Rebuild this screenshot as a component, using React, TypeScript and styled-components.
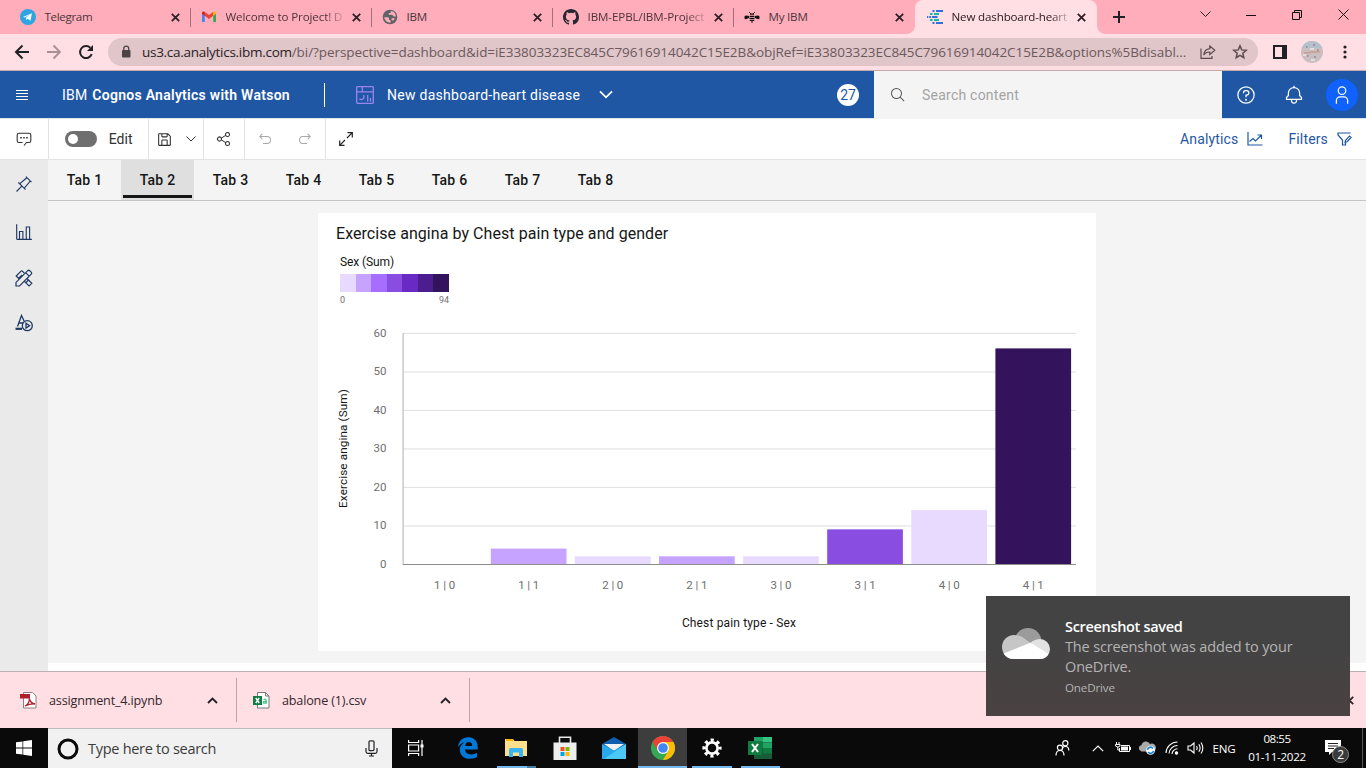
import React from "react";
import styled, { createGlobalStyle } from "styled-components";

const Global = createGlobalStyle`
  * { box-sizing: border-box; }
  html, body { margin: 0; padding: 0; overflow: hidden; }
  svg { display: block; flex: none; }
`;

const SEGOE = `"Open Sans", "Noto Sans", sans-serif`;
const PLEX = `Roboto, "Liberation Sans", sans-serif`;

const Screen = styled.div`
  position: relative;
  display: flex;
  flex-direction: column;
  width: 1366px;
  height: 768px;
  overflow: hidden;
  background: #fff;
  font-family: ${PLEX};
`;

/* ---------- browser chrome ---------- */
const TabStrip = styled.div`
  display: flex;
  height: 34px;
  padding-left: 10px;
  background: #ffadbb;
  font: 11.6px/34px ${SEGOE};
  color: #3c2b2f;
`;
const BrowserTab = styled.div<{ $active?: boolean; $last?: boolean }>`
  position: relative;
  display: flex;
  align-items: center;
  flex: none;
  width: ${(p) => (p.$active ? 182 : 181)}px;
  padding: 0 11px 0 ${(p) => (p.$active ? 12 : 10)}px;
  border-radius: 8px 8px 0 0;
  background: ${(p) => (p.$active ? "#ffdee4" : "transparent")};
  color: ${(p) => (p.$active ? "#2b2024" : "#4a3539")};
  &::after {
    content: "";
    display: ${(p) => (p.$active || p.$last ? "none" : "block")};
    position: absolute;
    right: 0;
    top: 8px;
    width: 1px;
    height: 19px;
    background: #a0717a;
  }
`;
const Flare = styled.i<{ $side: "left" | "right" }>`
  position: absolute;
  bottom: 0;
  ${(p) => p.$side}: -8px;
  width: 8px;
  height: 8px;
  background: radial-gradient(circle at ${(p) => (p.$side === "left" ? "0" : "100%")} 0, transparent 7.5px, #ffdee4 8px);
`;
const TabTitle = styled.span<{ $fade?: boolean; $space?: number }>`
  flex: 1;
  margin: 0 5px 0 8.5px;
  white-space: nowrap;
  letter-spacing: ${(p) => p.$space ?? -0.22}px;
  ${(p) => p.$fade && "mask-image: linear-gradient(90deg, #000 82%, transparent);"}
`;
const NewTab = styled.div`
  display: flex;
  align-items: center;
  margin-left: 16px;
`;
const WindowButtons = styled.div`
  display: flex;
  margin-left: auto;
  height: 29px;
`;
const WindowButton = styled.div`
  display: flex;
  align-items: center;
  justify-content: center;
  width: 46px;
`;
const AddressRow = styled.div`
  display: flex;
  align-items: center;
  height: 37px;
  padding-left: 14px;
  background: #ffdee4;
  border-bottom: 1px solid #c5a9ae;
`;
const NavIcon = styled.div<{ $w?: number }>`
  display: flex;
  width: ${(p) => p.$w ?? 32}px;
`;
const UrlPill = styled.div`
  display: flex;
  align-items: center;
  width: 1150px;
  height: 28px;
  margin: 0 15px 0 -2px;
  padding: 0 10px 0 12px;
  border-radius: 14px;
  background: #e0c5c9;
  font: 13.5px/28px ${SEGOE};
  color: #6b595c;
`;
const UrlText = styled.div`
  flex: 1;
  margin-left: 10px;
  white-space: nowrap;
  letter-spacing: -0.06px;
`;
const Host = styled.span`
  color: #2a2224;
  letter-spacing: -0.28px;
`;
const PillIcons = styled.div`
  display: flex;
  gap: 16px;
`;
const Avatar = styled.div`
  width: 22px;
  height: 22px;
  margin: 0 20px 0 14px;
  border-radius: 50%;
  overflow: hidden;
`;

/* ---------- application header ---------- */
const Header = styled.header`
  display: flex;
  align-items: center;
  height: 48px;
  background: #1f57a4;
  border-bottom: 1px solid #dfe5ee;
  color: #fff;
  font-size: 14px;
`;
const Product = styled.div`
  width: 262px;
  margin-left: 34px;
  letter-spacing: 0.27px;
  b { margin-left: 1px; font-weight: 600; }
`;
const HeaderRule = styled.div`
  width: 1px;
  height: 24px;
  margin-right: 31px;
  background: #fff;
`;
const DashboardName = styled.div`
  width: 193px;
  margin: 0 19px 0 13px;
  letter-spacing: 0.27px;
  white-space: nowrap;
`;
const CountBadge = styled.div`
  width: 22px;
  height: 22px;
  margin: 0 15px 0 auto;
  border-radius: 50%;
  background: #fff;
  color: #1f57a4;
  text-align: center;
  font: 14px/22px ${PLEX};
`;
const SearchField = styled.div`
  display: flex;
  align-items: center;
  align-self: flex-start;
  gap: 16px;
  width: 348px;
  height: 48px;
  padding-left: 16px;
  background: #f4f4f4;
  color: #a3a3a3;
  letter-spacing: 0.23px;
`;
const HeaderActions = styled.div`
  display: flex;
  align-items: center;
  gap: 28px;
  width: 144px;
  padding-left: 14px;
`;
const UserCircle = styled.div`
  display: flex;
  align-items: center;
  justify-content: center;
  width: 32px;
  height: 32px;
  margin-left: -6px;
  border-radius: 50%;
  background: #0f62fe;
`;

/* ---------- toolbar ---------- */
const Toolbar = styled.div`
  display: flex;
  height: 41px;
  border-bottom: 1px solid #e3e3e3;
  font-size: 14px;
  color: #323232;
`;
const ToolGroup = styled.div<{ $w: number; $pad: number; $open?: boolean }>`
  display: flex;
  align-items: center;
  justify-content: space-between;
  width: ${(p) => p.$w}px;
  padding: 0 ${(p) => p.$pad}px;
  border-right: ${(p) => (p.$open ? "none" : "1px solid #e3e3e3")};
`;
const Toggle = styled.div`
  width: 32px;
  height: 16px;
  padding: 3px;
  border-radius: 8px;
  background: #6f6f6f;
  &::before {
    content: "";
    display: block;
    width: 10px;
    height: 10px;
    border-radius: 50%;
    background: #fff;
  }
`;
const ToolLink = styled.div`
  display: flex;
  align-items: center;
  gap: 9px;
  margin-right: 25px;
  color: #1f57a4;
  letter-spacing: 0.15px;
  &:last-child { margin-right: 13px; }
`;
const Spacer = styled.div`
  flex: 1;
`;

/* ---------- workspace ---------- */
const Workspace = styled.div`
  display: flex;
  height: 511px;
`;
const Rail = styled.nav`
  display: flex;
  flex-direction: column;
  align-items: center;
  gap: 28px;
  width: 48px;
  padding-top: 15px;
  background: #eaeaea;
  svg:nth-child(2) { margin-top: 2px; }
  svg:nth-child(4) { margin-top: -1px; }
`;
const Main = styled.main`
  flex: 1;
  display: flex;
  flex-direction: column;
  background: #fff;
`;
const PageTabs = styled.div`
  display: flex;
  height: 41px;
  background: #f4f4f4;
  border-bottom: 1px solid #c6c6c6;
`;
const PageTab = styled.div<{ $active?: boolean }>`
  width: 73px;
  height: 40px;
  padding: 0 2px;
  background: ${(p) => (p.$active ? "#dfdfdf" : "transparent")};
  color: #161616;
  font: 500 14px/40px ${PLEX};
  letter-spacing: 0.25px;
  text-align: center;
  span {
    display: block;
    height: 38px;
    border-bottom: ${(p) => (p.$active ? "3px solid #161616" : "none")};
  }
`;
const Canvas = styled.div`
  height: 462px;
  padding: 12px 0 0 270px;
  background: #f4f4f4;
`;
const Card = styled.section`
  width: 778px;
  height: 438px;
  padding: 11px 0 0 18px;
  background: #fff;
  color: #161616;
`;
const CardTitle = styled.h1`
  margin: 0;
  font: 400 16px/20px ${PLEX};
  letter-spacing: 0.06px;
`;
const Legend = styled.div`
  width: 109px;
  margin: 10px 0 0 4px;
  font-size: 12px;
  line-height: 16px;
  letter-spacing: -0.1px;
`;
const Swatches = styled.div`
  display: flex;
  height: 18px;
  margin-top: 4px;
`;
const Swatch = styled.i<{ $c: string }>`
  flex: 1;
  background: ${(p) => p.$c};
`;
const LegendRange = styled.div`
  display: flex;
  justify-content: space-between;
  color: #6f6f6f;
  font-size: 9px;
  line-height: 16px;
  letter-spacing: 0;
`;

/* ---------- downloads ---------- */
const Downloads = styled.div`
  display: flex;
  align-items: center;
  height: 57px;
  background: #ffdee4;
  border-top: 1px solid #bdb0b2;
  font: 12.6px/20px ${SEGOE};
  color: #33272a;
`;
const DownloadItem = styled.div<{ $w: number; $gap: number }>`
  display: flex;
  align-items: center;
  width: ${(p) => p.$w}px;
  height: 44px;
  padding: 0 18px 0 ${(p) => p.$gap}px;
  border-right: 1px solid #bda3a8;
`;
const FileName = styled.div`
  flex: 1;
  margin: 1px 0 0 12px;
  letter-spacing: -0.17px;
`;

/* ---------- taskbar ---------- */
const Taskbar = styled.footer`
  display: flex;
  height: 40px;
  background: #0a0a0a;
  color: #fff;
  font-family: ${SEGOE};
`;
const StartButton = styled.div`
  display: flex;
  align-items: center;
  justify-content: center;
  width: 48px;
`;
const TaskSearch = styled.div`
  display: flex;
  align-items: center;
  width: 344px;
  padding: 0 14px 0 9px;
  background: #f1f1f1;
  border-top: 1px solid #bdbdbd;
  color: #3b3b3b;
  font-size: 14.5px;
  letter-spacing: -0.28px;
  span { flex: 1; margin-left: 9px; }
`;
const TaskApps = styled.div`
  display: flex;
`;
const TaskApp = styled.div<{ $state?: "open" | "active" | "multi" }>`
  position: relative;
  display: flex;
  align-items: center;
  justify-content: center;
  width: 48.8px;
  background: ${(p) => (p.$state === "active" ? "#3d3d3d" : "transparent")};
  &:first-child { margin-right: 2.5px; }
  &::after {
    content: "";
    position: absolute;
    bottom: 0;
    left: ${(p) => (p.$state === "active" ? 0 : 4.5)}px;
    right: ${(p) => (p.$state === "active" ? 0 : 4.5)}px;
    height: ${(p) => (p.$state ? 2 : 0)}px;
    background: ${(p) => (p.$state === "multi" ? "linear-gradient(90deg, #76b9ed 78%, #4d7ba0 78%)" : "#76b9ed")};
  }
`;
const Tray = styled.div`
  display: flex;
  align-items: center;
  margin-left: auto;
  font-size: 11.6px;
  letter-spacing: -0.28px;
`;
const TrayIcon = styled.div<{ $w: number }>`
  display: flex;
  justify-content: center;
  width: ${(p) => p.$w}px;
`;
const Clock = styled.div`
  width: 60px;
  margin: 0 7px 0 5px;
  text-align: center;
  line-height: 18px;
  white-space: nowrap;
  div:first-child { letter-spacing: -0.5px; }
`;
const ActionCenter = styled.div`
  position: relative;
  width: 48px;
  height: 40px;
  padding: 12px 0 0 11px;
`;
const ActionBadge = styled.div`
  position: absolute;
  left: 18px;
  top: 18px;
  width: 17px;
  height: 17px;
  border: 1px solid #8a8a8a;
  border-radius: 50%;
  background: #3a3a3a;
  font-size: 12px;
  line-height: 15px;
  text-align: center;
`;
const DesktopEdge = styled.div`
  width: 4px;
  height: 40px;
  border-left: 1px solid #555;
`;

/* ---------- toast ---------- */
const Toast = styled.aside`
  position: absolute;
  left: 986px;
  top: 596px;
  display: flex;
  width: 364px;
  height: 120px;
  padding: 21px 0 0 16px;
  background: linear-gradient(180deg, #434343 0%, #444343 45%, #4a4142 100%);
  font: 14.5px/20px ${SEGOE};
  color: #b4b4b4;
  svg { margin-top: 11px; }
`;
const ToastText = styled.div`
  margin-left: 15px;
  letter-spacing: -0.15px;
  white-space: nowrap;
`;
const ToastTitle = styled.div`
  color: #fff;
  font-weight: 600;
  letter-spacing: -0.32px;
`;
const ToastSource = styled.div`
  margin-top: 1px;
  font-size: 11.6px;
`;

/* ---------- icons ---------- */
const Carbon = ({ d, size = 16, color = "currentColor", flip }: { d: string; size?: number; color?: string; flip?: boolean }) => (
  <svg width={size} height={size} viewBox="0 0 32 32" fill={color}>
    <path d={d} transform={flip ? "matrix(-1 0 0 1 32 0)" : undefined} />
  </svg>
);
const P = {
  search: "M29,27.5859l-7.5521-7.5521a11.0177,11.0177,0,1,0-1.4141,1.4141L27.5859,29ZM4,13a9,9,0,1,1,9,9A9.01,9.01,0,0,1,4,13Z",
  help: "M16,2A14,14,0,1,0,30,16,14,14,0,0,0,16,2Zm0,26A12,12,0,1,1,28,16,12,12,0,0,1,16,28ZM14.5,23.5a1.5,1.5,0,1,0,3,0a1.5,1.5,0,1,0-3,0ZM17,8H15.5A4.49,4.49,0,0,0,11,12.5V13h2v-.5A2.5,2.5,0,0,1,15.5,10H17a2.5,2.5,0,0,1,0,5H15v4.5h2V17a4.5,4.5,0,0,0,0-9Z",
  bell: "M28.7071,19.293,26,16.5859V13a10.0136,10.0136,0,0,0-9-9.9492V1H15V3.0508A10.0136,10.0136,0,0,0,6,13v3.5859L3.2929,19.293A1,1,0,0,0,3,20v3a1,1,0,0,0,1,1h7v.7768a5.152,5.152,0,0,0,4.5,5.1987A5.0057,5.0057,0,0,0,21,25V24h7a1,1,0,0,0,1-1V20A1,1,0,0,0,28.7071,19.293ZM19,25a3,3,0,0,1-6,0V24h6Zm8-3H5V20.4141L7.707,17.707A1,1,0,0,0,8,17V13a8,8,0,0,1,16,0v4a1,1,0,0,0,.293.707L27,20.4141Z",
  user: "M16,4a5,5,0,1,1-5,5,5,5,0,0,1,5-5m0-2a7,7,0,1,0,7,7A7,7,0,0,0,16,2ZM26,30H24V25a5,5,0,0,0-5-5H13a5,5,0,0,0-5,5v5H6V25a7,7,0,0,1,7-7h6a7,7,0,0,1,7,7Z",
  save: "M27.71,9.29l-5-5A1,1,0,0,0,22,4H6A2,2,0,0,0,4,6V26a2,2,0,0,0,2,2H26a2,2,0,0,0,2-2V10A1,1,0,0,0,27.71,9.29ZM12,6h8v4H12Zm8,20H12V18h8Zm2,0V18a2,2,0,0,0-2-2H12a2,2,0,0,0-2,2v8H6V6h4v4a2,2,0,0,0,2,2h8a2,2,0,0,0,2-2V6.41l4,4V26Z",
  share: "M23,20a5,5,0,0,0-3.89,1.89L11.8,17.32a4.46,4.46,0,0,0,0-2.64l7.31-4.57A5,5,0,1,0,18,7a4.79,4.79,0,0,0,.2,1.32l-7.31,4.57a5,5,0,1,0,0,6.22l7.31,4.57A4.79,4.79,0,0,0,18,25a5,5,0,1,0,5-5ZM23,4a3,3,0,1,1-3,3A3,3,0,0,1,23,4ZM7,19a3,3,0,1,1,3-3A3,3,0,0,1,7,19Zm16,9a3,3,0,1,1,3-3A3,3,0,0,1,23,28Z",
  undo: "M20,10H7.8149l3.5874-3.5859L10,5,4,11,10,17l1.4023-1.4146L7.8179,12H20a6,6,0,0,1,0,12H12v2h8a8,8,0,0,0,0-16Z",
  pin: "M28.5858,13.3137,30,11.9,20,2,18.6858,3.4142l1.1858,1.1858L8.38,14.3225,6.6641,12.6067,5.25,14l5.6572,5.6773L2,28.5831,3.41,30l8.9111-8.9087L18,26.7482l1.3929-1.414L17.6765,23.618l9.724-11.4895ZM16.26,22.1987,9.8013,15.74,21.2932,6.016l4.6911,4.6911Z",
  bars: "M27,28V6H19V28H15V14H7V28H4V2H2V28a2,2,0,0,0,2,2H30V28ZM13,28H9V16h4Zm12,0H21V8h4Z",
};

const Line = ({ d, w, h, sw = 1, color = "#202124", children }: { d: string; w: number; h: number; sw?: number; color?: string; children?: React.ReactNode }) => (
  <svg width={w} height={h} viewBox={`0 0 ${w} ${h}`} fill="none" stroke={color} strokeWidth={sw}>
    <path d={d} />
    {children}
  </svg>
);
const CloseX = () => <Line w={9} h={9} sw={1.8} d="M.8.8l7.4 7.4M8.2.8L.8 8.2" color="#2b2024" />;

const Telegram = () => (
  <svg width="16" height="16" viewBox="0 0 16 16"><circle cx="8" cy="8" r="8" fill="#2ca5e0" /><path d="M3 7.9l8.9-3.6-1.4 7.4-2.8-2-1.4 1.4-.3-2.4 3.7-3.1-4.7 2.9z" fill="#fff" /></svg>
);
const Gmail = () => (
  <svg width="16" height="16" viewBox="0 0 16 16">
    <path d="M1 4v9h2.8V6.5z" fill="#4285f4" /><path d="M15 4v9h-2.8V6.5z" fill="#34a853" />
    <path d="M1 4.4C1 2.4 2.8 2 3.9 3v3.9L1 4.8z" fill="#c5221f" /><path d="M15 4.4c0-2-1.8-2.4-2.9-1.4v3.9L15 4.8z" fill="#fbbc04" />
    <path d="M3.8 2.9L8 6.1l4.2-3.2v3.9L8 10 3.8 6.8z" fill="#ea4335" />
  </svg>
);
const Globe = () => (
  <svg width="16" height="16" viewBox="0 0 16 16"><circle cx="8" cy="8" r="7.3" fill="#5f6368" /><path d="M2.2 8.3h3.5c1 0 1.3.8 1.3 1.5v1.2h1.4l.2 2.7a6 6 0 01-6.4-5.4zM8.8 2.1L8.7 4H6.8v1.7h3.4c.8 0 .9 1.9 1.9 1.9h1.8A6 6 0 008.8 2.1zM9.7 9.3h3l-1 2.1-2.2-.5z" fill="#ffadbb" /></svg>
);
const Github = () => (
  <svg width="16" height="16" viewBox="0 0 16 16" fill="#24292f"><path d="M8 0C3.58 0 0 3.58 0 8c0 3.54 2.29 6.53 5.47 7.59.4.07.55-.17.55-.38 0-.19-.01-.82-.01-1.49-2.01.37-2.53-.49-2.69-.94-.09-.23-.48-.94-.82-1.13-.28-.15-.68-.52-.01-.53.63-.01 1.08.58 1.23.82.72 1.21 1.87.87 2.33.66.07-.52.28-.87.51-1.07-1.78-.2-3.64-.89-3.64-3.95 0-.87.31-1.59.82-2.15-.08-.2-.36-1.02.08-2.12 0 0 .67-.21 2.2.82a7.6 7.6 0 014 0c1.53-1.04 2.2-.82 2.2-.82.44 1.1.16 1.92.08 2.12.51.56.82 1.27.82 2.15 0 3.07-1.87 3.75-3.65 3.95.29.25.54.73.54 1.48 0 1.07-.01 1.93-.01 2.2 0 .21.15.46.55.38A8.01 8.01 0 0016 8c0-4.42-3.58-8-8-8z" /></svg>
);
const Bee = () => (
  <svg width="16" height="16" viewBox="0 0 16 16">
    <path d="M5.2 3.2L7 5M10.800 3.200L9 5" stroke="#111" />
    <path d="M5.400 7L2 6.500C0 6.500-.2 10.300 1.800 10.300L5 9zM10.600 7l3.400-.5c2 0 2.200 3.800.2 3.800L11 9z" fill="#111" />
    <path d="M6 5.200h4M5.800 7.400h4.400M5.500 9.400h5M5.800 11.300h4.400M7 13h2" stroke="#111" strokeWidth="1.200" />
  </svg>
);
const CognosMark = () => (
  <svg width="16" height="16" viewBox="0 0 16 16" strokeWidth="2" fill="none">
    <path d="M9 2h7M5.5 2h2M5 8h5.5M9 14h7M5.5 14h2M2.3 8h1.7" stroke="#2f6fe0" />
    <path d="M7 5h5M3 5h2.5M7 11h5M3 11h2.5" stroke="#14b8a6" />
    <path d="M0 8h1.3" stroke="#2f6fe0" />
  </svg>
);

const TABS = [
  { icon: <Telegram />, title: "Telegram", space: -0.34 },
  { icon: <Gmail />, title: "Welcome to Project! D", fade: true, space: -0.12 },
  { icon: <Globe />, title: "IBM" },
  { icon: <Github />, title: "IBM-EPBL/IBM-Project", fade: true, space: -0.1 },
  { icon: <Bee />, title: "My IBM", last: true },
  { icon: <CognosMark />, title: "New dashboard-heart", fade: true, active: true, space: -0.16 },
];

/* ---------- chart ---------- */
const BARS = [
  { label: "1 | 0", value: 0, color: "#e8daff" },
  { label: "1 | 1", value: 4, color: "#c5a3ff" },
  { label: "2 | 0", value: 2, color: "#e8daff" },
  { label: "2 | 1", value: 2, color: "#c5a3ff" },
  { label: "3 | 0", value: 2, color: "#e8daff" },
  { label: "3 | 1", value: 9, color: "#8a4de2" },
  { label: "4 | 0", value: 14, color: "#e8daff" },
  { label: "4 | 1", value: 56, color: "#32135c" },
];
const Chart = () => {
  const left = 67;
  const base = 256;
  const step = 84.1;
  const unit = 3.85;
  return (
    <svg width="760" height="330" viewBox="0 0 760 330" fontFamily={PLEX} fontSize="12">
      {[60, 50, 40, 30, 20, 10].map((v) => (
        <rect key={v} x={left} y={base - v * unit - 0.2} width="673" height={1.2} fill="#e4e4e4" />
      ))}
      {[60, 50, 40, 30, 20, 10, 0].map((v) => (
        <text key={v} x="50.5" y={Math.round(base - v * unit + 3.9)} textAnchor="end" fill="#6f6f6f" fontSize="11.5">{v}</text>
      ))}
      <rect x={left - 0.5} y="25" width="1.2" height="232" fill="#bdbdbd" />
      {BARS.map((b, i) => (
        <g key={b.label}>
          <rect x={left + step * i + 3.7} y={base - b.value * unit} width="75.7" height={b.value * unit} fill={b.color} />
          <text x={left + step * (i + 0.5) - 0.5} y="281" textAnchor="middle" fill="#6f6f6f" fontSize="11.5" letterSpacing="-.1">{b.label}</text>
        </g>
      ))}
      <rect x={left} y={base} width="673" height="1" fill="#8d8d8d" />
      <text x="403" y="319" textAnchor="middle" fill="#161616" letterSpacing=".15">Chest pain type - Sex</text>
      <text transform="translate(11 140.5) rotate(-90)" textAnchor="middle" fill="#161616" fontSize="11.7" letterSpacing=".13">Exercise angina (Sum)</text>
    </svg>
  );
};

export default function App() {
  const navy = "#1d3864";
  return (
    <Screen>
      <Global />
      <TabStrip>
        {TABS.map((t) => (
          <BrowserTab key={t.title} $active={t.active} $last={t.last}>
            {t.active && <><Flare $side="left" /><Flare $side="right" /></>}
            {t.icon}
            <TabTitle $fade={t.fade} $space={t.space}>{t.title}</TabTitle>
            <CloseX />
          </BrowserTab>
        ))}
        <NewTab><Line w={12} h={12} sw={2} d="M6 0v12M0 6h12" /></NewTab>
        <WindowButtons>
          <WindowButton><Line w={11} h={7} d="M.5.5l5 5 5-5" /></WindowButton>
          <WindowButton><Line w={10} h={2} d="M0 1.5h10" color="#111" /></WindowButton>
          <WindowButton><Line w={10} h={10} d="M.5 2.5h7v7h-7zM2.5 2.5v-2h7v7h-2" color="#111" /></WindowButton>
          <WindowButton><Line w={11} h={11} d="M.5.5l10 10M10.5.5l-10 10" color="#111" /></WindowButton>
        </WindowButtons>
      </TabStrip>
      <AddressRow>
        <NavIcon><Line w={16} h={16} sw={2} d="M15 8H2M8.5 1.5L2 8l6.5 6.5" /></NavIcon>
        <NavIcon><Line w={16} h={16} sw={1.8} color="#a78f94" d="M1 8h13M7.5 1.5L14 8l-6.5 6.5" /></NavIcon>
        <NavIcon>
          <Line w={16} h={16} sw={2} d="M13.7 10.2A6 6 0 1112.3 3.8"><path d="M15 1v6H9z" fill="#202124" stroke="none" /></Line>
        </NavIcon>
        <UrlPill>
          <svg width="12" height="14" viewBox="0 0 12 14"><rect x="2" y="5" width="8.5" height="7.5" rx="1" fill="#4d4346" /><path d="M3.8 5.5V3.5a2.4 2.4 0 014.9 0v2" fill="none" stroke="#4d4346" strokeWidth="1.3" /></svg>
          <UrlText><Host>us3.ca.analytics.ibm.com</Host>/bi/?perspective=dashboard&amp;id=iE33803323EC845C79616914042C15E2B&amp;objRef=iE33803323EC845C79616914042C15E2B&amp;options%5Bdisabl...</UrlText>
          <PillIcons>
            <Line w={16} h={16} sw={1.2} color="#5c4c50" d="M1 4.5v9.8h11V12M9.8 2l5 4.2-5 4.2V8C7 8 5 9 3.7 11c.4-3.5 2.5-5.8 6.1-6.3z" />
            <Line w={16} h={16} sw={1.5} color="#5c4c50" d="M8 1.8l1.7 4.1 4.5.4-3.4 2.9 1 4.4L8 11.3l-3.8 2.3 1-4.4-3.4-2.9 4.5-.4z" />
          </PillIcons>
        </UrlPill>
        <Line w={14} h={14} sw={2} d="M1 1h12v12H1z"><path d="M11 1v12" strokeWidth="4" /></Line>
        <Avatar>
          <svg width="22" height="22" viewBox="0 0 22 22"><rect width="22" height="22" fill="#c9bfc1" /><path d="M0 0h22v7H0z" fill="#b4c0cc" /><path d="M3 12l16-1.5" stroke="#c99d90" strokeWidth="1.5" /><path d="M12 4h2M16 9h1.5M6 15h1.5M13 16h2M5 6h1.5" stroke="#7c6c70" strokeWidth="1.2" /><path d="M2 14h3M9 8h4M10 19h4" stroke="#e4dcdd" strokeWidth="2" /></svg>
        </Avatar>
        <svg width="4" height="14" viewBox="0 0 4 14" fill="#202124"><circle cx="2" cy="2" r="1.6" /><circle cx="2" cy="7" r="1.6" /><circle cx="2" cy="12" r="1.6" /></svg>
      </AddressRow>

      <Header>
        <svg width="28" height="12" viewBox="0 0 28 12" stroke="#fff"><path d="M16 1.5h12M16 4.5h12M16 7.5h12M16 10.5h12" /></svg>
        <Product>IBM <b>Cognos Analytics with Watson</b></Product>
        <HeaderRule />
        <Line w={18} h={18} color="#9a85f0" sw={1.3} d="M1.5.7h15q.8 0 .8.8v15q0 .8-.8.8h-15q-.8 0-.8-.8v-15q0-.8.8-.8zM.7 5.8h16.6M6.3.7v5.1M7.3 9.2a2.5 2.5 0 11-3.8 3.5M11.7 9v6.5M14.5 12v3.5" />
        <DashboardName>New dashboard-heart disease</DashboardName>
        <Line w={14} h={9} color="#fff" sw={1.8} d="M1 1.3l6 6 6-6" />
        <CountBadge>27</CountBadge>
        <SearchField><Carbon d={P.search} color="#5a5a5a" />Search content</SearchField>
        <HeaderActions>
          <Carbon d={P.help} size={20} />
          <Carbon d={P.bell} size={20} />
          <UserCircle><Carbon d={P.user} size={20} /></UserCircle>
        </HeaderActions>
      </Header>

      <Toolbar>
        <ToolGroup $w={49} $pad={16}>
          <Line w={16} h={14} color="#323232" sw={1.1} d="M6.5 10.5H3q-1.8 0-1.8-1.8V3Q1.2 1.2 3 1.2h10q1.8 0 1.8 1.8v5.7q0 1.8-1.8 1.8h-2.5L8 13.5"><path d="M4.2 5.8h1.6M7.2 5.8h1.6M10.2 5.8h1.6" strokeWidth="1.6" /></Line>
        </ToolGroup>
        <ToolGroup $w={100} $pad={15.5}><Toggle /><span>Edit</span></ToolGroup>
        <ToolGroup $w={55} $pad={7}><Carbon d={P.save} size={17} /><Line w={10} h={6} color="#323232" d="M.5.5l4.5 4.5L9.5.5" /></ToolGroup>
        <ToolGroup $w={41} $pad={12}><Carbon d={P.share} /></ToolGroup>
        <ToolGroup $w={81} $pad={12}><Carbon d={P.undo} color="#a8a8a8" /><Carbon d={P.undo} color="#a8a8a8" flip /></ToolGroup>
        <ToolGroup $w={41} $pad={13} $open><Line w={14} h={14} color="#222" sw={1.2} d="M8.5.7h4.8v4.8M13.3.7L8 6M5.5 13.3H.7V8.5M.7 13.3L6 8" /></ToolGroup>
        <Spacer />
        <ToolLink>Analytics<Line w={16} h={14} color="#1f57a4" sw={1.2} d="M1 0v13h14.5M2.5 9.5l3.5-3 2.5 2.5L14 3.5M10.5 3h4v4" /></ToolLink>
        <ToolLink>Filters<Line w={16} h={14} color="#1f57a4" sw={1.2} d="M13 1.5V1H1v2l4.5 5v5h3V9M8.5 8.3l4-4.3 1.6 1.5-4 4.2-2 .6z" /></ToolLink>
      </Toolbar>

      <Workspace>
        <Rail>
          <Carbon d={P.pin} size={18} color={navy} />
          <Carbon d={P.bars} size={18} color={navy} />
          <Line w={18} h={18} color={navy} sw={1.2} d="M1 17v-3.6L12.7 1.7q1-.9 2 0l1.5 1.5q.9 1 0 2L4.6 17zM10.7 3.7l3.5 3.5M7 6L3.6 9.4 1.2 7l4.6-4.6q.9-.9 1.8 0L9.2 4M12 9.5l4.8 4.8-2.7 2.7-4.7-4.7M11 13.5l2.5-2.5" />
          <Line w={18} h={18} color={navy} sw={1.3} d="M2.5 12.5L6.5 1.5l2.8 6M4 9h4"><circle cx="12.3" cy="11.7" r="5" /><path d="M11 9.3v4.8l3.6-2.4z" /><path d="M.5 14.8h6.5" strokeWidth="2.2" /></Line>
        </Rail>
        <Main>
          <PageTabs>
            {[1, 2, 3, 4, 5, 6, 7, 8].map((n) => (
              <PageTab key={n} $active={n === 2}><span>Tab {n}</span></PageTab>
            ))}
          </PageTabs>
          <Canvas>
            <Card>
              <CardTitle>Exercise angina by Chest pain type and gender</CardTitle>
              <Legend>
                Sex (Sum)
                <Swatches>
                  {["#e8daff", "#c5a3ff", "#a56eff", "#8a4de2", "#6929c4", "#4c1d8f", "#32135c"].map((c) => <Swatch key={c} $c={c} />)}
                </Swatches>
                <LegendRange><span>0</span><span>94</span></LegendRange>
              </Legend>
              <Chart />
            </Card>
          </Canvas>
        </Main>
      </Workspace>

      <Downloads>
        <DownloadItem $w={237} $gap={20}>
          <svg width="17" height="17" viewBox="0 0 17 17"><path d="M3.5.5h9l3.5 3.5v12H3.5z" fill="#fff" stroke="#8c8082" /><path d="M0 2h10v4.5H0z" fill="#b01e2d" /><path d="M5 14c3-1.5 4.5-4.5 4.3-7.5.8 3 2.2 5 5.7 5.5-4-.2-6.5.3-10 2z" fill="none" stroke="#b01e2d" strokeWidth="1.3" /></svg>
          <FileName>assignment_4.ipynb</FileName>
          <Line w={11} h={7} sw={1.8} d="M1 6l4.5-4.5L10 6" />
        </DownloadItem>
        <DownloadItem $w={233} $gap={16}>
          <svg width="17" height="17" viewBox="0 0 17 17"><path d="M4.5.5h8l3.5 3.5v12H4.5z" fill="#fff" stroke="#777" /><path d="M12.5.5v3.5H16" fill="none" stroke="#777" /><path d="M0 4h9v9H0z" fill="#107c41" /><path d="M2.8 6l3.4 5M6.2 6l-3.4 5" stroke="#fff" strokeWidth="1.4" /><path d="M10.5 7.5q2.7-1 2.7 1v3.2M13 9.3q-3-.2-2.6 1.3.8 1.3 2.6-.2" stroke="#33c481" strokeWidth="1.2" fill="none" /></svg>
          <FileName>abalone (1).csv</FileName>
          <Line w={11} h={7} sw={1.8} d="M1 6l4.5-4.5L10 6" />
        </DownloadItem>
        <Spacer />
        <NavIcon $w={21}><CloseX /></NavIcon>
      </Downloads>

      <Taskbar>
        <StartButton>
          <svg width="16" height="16" viewBox="0 0 16 16" fill="#fff"><path d="M0 2.3l6.5-.9v6.2H0zM7.2 1.3L16 0v7.6H7.2zM0 8.4h6.5v6.2L0 13.7zM7.2 8.4H16V16l-8.8-1.3z" /></svg>
        </StartButton>
        <TaskSearch>
          <svg width="22" height="22" viewBox="0 0 22 22"><circle cx="11" cy="11" r="9" fill="none" stroke="#0a0a0a" strokeWidth="3" /></svg>
          <span>Type here to search</span>
          <Line w={13} h={17} sw={1.2} d="M6.5.8q2.5 0 2.5.6v8.7q0 .6-2.5.6t-2.500-.6V1.400q0-.6 2.500-.6zM1 8v3.500q0 1.800 1.800 1.800h7.400q1.800 0 1.800-1.800V8M6.500 13.300V16M4 16h5" />
        </TaskSearch>
        <TaskApps>
          <TaskApp><Line w={18} h={16} color="#fff" sw={1.2} d="M1.6 0v2.5h10V0M1.6 5h10v6h-10zM1.6 16v-2.5h10V16M15 0v16"><path d="M13.5 6h3" strokeWidth="3" /></Line></TaskApp>
          <TaskApp>
            <svg width="22" height="22" viewBox="0 0 22 22" fill="#0078d7"><path d="M1 10C1.800 4 5.500.3 11.500.3c6 0 9.200 4.500 9.200 9.500v2.700H8c.3 3.600 3.200 4.900 6.200 4.900 2.400 0 4.200-.7 5.800-1.700v4.400c-2 1.100-4.100 1.700-6.800 1.700-6.700 0-10.400-4-10.400-9.100C2.800 9.400 5.200 6.500 8 5.300 5 5.700 2.800 7.300 1 10zM8.200 8.900h7c0-2.700-1.200-3.900-3.400-3.900-2.100 0-3.300 1.500-3.600 3.900z" /></svg>
          </TaskApp>
          <TaskApp $state="multi">
            <svg width="22" height="20" viewBox="0 0 22 20"><path d="M0 1h8l1.500 2H22v15H0z" fill="#ffe08a" /><path d="M1 1h7v2H1z" fill="#f7b500" /><path d="M4 19v-7.500q0-1.500 1.500-1.500h11q1.500 0 1.500 1.500V19h-4v-4.500H8V19z" fill="#3ab4f2" /></svg>
          </TaskApp>
          <TaskApp>
            <svg width="24" height="24" viewBox="0 0 24 24"><path d="M6.500 7V1.200h11V7" fill="none" stroke="#e8e8e8" strokeWidth="1.6" /><path d="M.5 6.500h23V24H.5z" fill="#eee" /><path d="M7.500 11h4v4h-4z" fill="#f25022" /><path d="M12.500 11h4v4h-4z" fill="#7fba00" /><path d="M7.500 16h4v4h-4z" fill="#00a4ef" /><path d="M12.500 16h4v4h-4z" fill="#ffb900" /></svg>
          </TaskApp>
          <TaskApp>
            <svg width="24" height="24" viewBox="0 0 24 24"><path d="M0 8L12 1l12 7-12 8z" fill="#0f5fae" /><path d="M2 8h20l-10 7z" fill="#f2f2f2" /><path d="M0 8l12 6.500L24 8v15H0z" fill="#29a9ea" /><path d="M24 8v15H2z" fill="#4cc8f6" /></svg>
          </TaskApp>
          <TaskApp $state="active">
            <svg width="24" height="24" viewBox="0 0 24 24"><circle cx="12" cy="12" r="12" fill="#34a853" /><path d="M12 0a12 12 0 0110.400 6H12L6.800 15 1.600 6A12 12 0 0112 0z" fill="#ea4335" /><path d="M22.400 6A12 12 0 0112 24l5.200-9L12 6z" fill="#fbbc04" /><circle cx="12" cy="12" r="6" fill="#fff" /><circle cx="12" cy="12" r="4.8" fill="#4285f4" /></svg>
          </TaskApp>
          <TaskApp $state="open">
            <svg width="20" height="20" viewBox="0 0 20 20" fill="none" stroke="#fff"><circle cx="10" cy="10" r="5.6" strokeWidth="2.6" /><circle cx="10" cy="10" r="8" strokeWidth="3.2" strokeDasharray="3.14 3.14" strokeDashoffset="1.57" /></svg>
          </TaskApp>
          <TaskApp $state="open">
            <svg width="24" height="22" viewBox="0 0 24 22"><path d="M6 0h9v5.500H6z" fill="#21a366" /><path d="M15 0h9v5.500h-9z" fill="#33c481" /><path d="M6 5.500h9V11H6z" fill="#107c41" /><path d="M15 5.500h9V11h-9z" fill="#21a366" /><path d="M6 11h18v11H6z" fill="#185c37" /><path d="M15 11h9v5.500h-9z" fill="#107c41" /><path d="M0 4h14v14H0z" fill="#107c41" /><path d="M4 7l6 8M10 7l-6 8" stroke="#fff" strokeWidth="2" /></svg>
          </TaskApp>
        </TaskApps>
        <Tray>
          <TrayIcon $w={46}><Line w={15} h={16} color="#fff" sw={1.2} d="M1 15.500q0-5 4-5t4 5M7.500 8q.5-1.500 3-1.500 3.300 0 3.300 4"><circle cx="5" cy="7.8" r="2.6" /><circle cx="10.3" cy="3.3" r="2.6" /></Line></TrayIcon>
          <TrayIcon $w={26}><Line w={12} h={7} color="#fff" sw={1.2} d="M.8 6.200L6 1l5.200 5.200" /></TrayIcon>
          <TrayIcon $w={23}><Line w={16} h={12} color="#fff" sw={1} d="M6 3.500h8.500v6H4.500V6M1.500 0v2.500M4 0v2.500M.5 2.500h4.500v1.500q-2 2.200-4.500 0zM2.800 5v3h1.700M15.500 5v3"><path d="M6 6.500h7" strokeWidth="4" /></Line></TrayIcon>
          <TrayIcon $w={25}>
            <svg width="18" height="14" viewBox="0 0 18 14"><path d="M3.500 10.500a3.200 3.200 0 010-6.300A4.500 4.500 0 0112 3a4 4 0 013.500 7.500z" fill="#a9a9a9" /><circle cx="12.5" cy="9.3" r="4.5" fill="#fff" /><path d="M9.500 8.800a3 3 0 015.400-1.300M15.500 9.800a3 3 0 01-5.400 1.300" fill="none" stroke="#1683d8" strokeWidth="1.7" /></svg>
          </TrayIcon>
          <TrayIcon $w={25}><Line w={14} h={14} color="#fff" sw={1.1} d="M1 12A11.500 11.500 0 0112.500 1M4 12.500a8.500 8.500 0 018.500-8M7 13a5.500 5.500 0 015.500-5.200"><circle cx="11.5" cy="12" r="1.2" fill="#fff" /></Line></TrayIcon>
          <TrayIcon $w={22}><Line w={17} h={14} color="#fff" sw={1.1} d="M1 5h2.500L7 2v10L3.500 9H1zM9.500 5q1.300 2 0 4M11.800 3.200q2.600 3.800 0 7.600M14 1.500q3.700 5.500 0 11" /></TrayIcon>
          <TrayIcon $w={36}>ENG</TrayIcon>
          <Clock><div>08:55</div><div>01-11-2022</div></Clock>
          <ActionCenter>
            <svg width="16" height="16" viewBox="0 0 16 16"><path d="M0 0h16v12H7l-3 3v-3H0z" fill="#fff" /><path d="M3 3.500h10M3 6h10M3 8.500h6" stroke="#222" /></svg>
            <ActionBadge>2</ActionBadge>
          </ActionCenter>
          <DesktopEdge />
        </Tray>
      </Taskbar>

      <Toast>
        <svg width="48" height="31" viewBox="0 0 48 31">
          <circle cx="26" cy="13.5" r="13.5" fill="#9b9b9b" />
          <path d="M12 7q5 0 8.500 2.200l8 5.500L12 31A12 12 0 0112 7z" fill="#c6c6c6" />
          <path d="M28.500 14.700Q33 11 38 11a10 10 0 010 20z" fill="#e2e2e2" />
          <path d="M1.500 25.500L28.500 14.700l18 11.300Q44 31 38 31H12Q5 31 1.500 25.500z" fill="#fff" />
        </svg>
        <ToastText>
          <ToastTitle>Screenshot saved</ToastTitle>
          The screenshot was added to your<br />OneDrive.
          <ToastSource>OneDrive</ToastSource>
        </ToastText>
      </Toast>
    </Screen>
  );
}
